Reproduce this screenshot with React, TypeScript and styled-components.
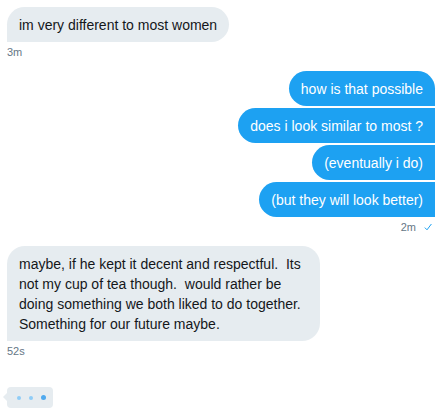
import React from "react";
import styled, { createGlobalStyle } from "styled-components";

const Global = createGlobalStyle`
  html, body { margin: 0; padding: 0; background: #ffffff; }
  body { font-family: "Liberation Sans", Arial, sans-serif; }
`;

const Page = styled.div`
  width: 440px;
  height: 420px;
  box-sizing: border-box;
  padding: 7px 5px 0 7px;
  display: flex;
  flex-direction: column;
  overflow: hidden;
`;

const Group = styled.div<{ $sent?: boolean; $gap?: number }>`
  display: flex;
  flex-direction: column;
  align-items: ${(p) => (p.$sent ? "flex-end" : "flex-start")};
  gap: 2px;
  margin-bottom: ${(p) => p.$gap ?? 12}px;
`;

const Bubble = styled.div<{ $sent?: boolean; $pos: "first" | "middle" | "last" | "single" }>`
  box-sizing: border-box;
  max-width: 313px;
  padding: 8px 12px 7px 12px;
  font-size: 14px;
  line-height: 20px;
  color: ${(p) => (p.$sent ? "#ffffff" : "#14171a")};
  background: ${(p) => (p.$sent ? "#1da1f2" : "#e6ecf0")};
  border-radius: ${(p) => {
    if (p.$sent) {
      const tr = p.$pos === "first" || p.$pos === "single" ? 18 : 0;
      return `18px ${tr}px 0 18px`;
    }
    return `18px 18px 18px 0`;
  }};
  white-space: pre-wrap;
`;

const Meta = styled.div`
  display: flex;
  align-items: center;
  gap: 8px;
  font-size: 11px;
  line-height: 14px;
  color: #657786;
  margin-top: 1px;
`;

const Check = styled.svg`
  width: 8px;
  height: 8px;
  margin-right: 3px;
`;

const Typing = styled.div`
  position: relative;
  margin-top: 27px;
  width: 46px;
  height: 21px;
  box-sizing: border-box;
  background: #e6ecf0;
  border-radius: 4px;
  display: flex;
  align-items: center;
  padding-left: 10px;
  gap: 8px;
  &::before {
    content: "";
    position: absolute;
    left: -4px;
    top: 6px;
    border-top: 4px solid transparent;
    border-bottom: 4px solid transparent;
    border-right: 4px solid #e6ecf0;
  }
`;

const Dot = styled.span<{ $size: number; $color: string }>`
  width: ${(p) => p.$size}px;
  height: ${(p) => p.$size}px;
  border-radius: 50%;
  background: ${(p) => p.$color};
`;

export default function App() {
  return (
    <>
      <Global />
      <Page>
        <Group $gap={12}>
          <Bubble $pos="single">im very different to most women</Bubble>
          <Meta>3m</Meta>
        </Group>
        <Group $sent $gap={12}>
          <Bubble $sent $pos="first">how is that possible</Bubble>
          <Bubble $sent $pos="middle">does i look similar to most ?</Bubble>
          <Bubble $sent $pos="middle">(eventually i do)</Bubble>
          <Bubble $sent $pos="last">(but they will look better)</Bubble>
          <Meta>
            2m
            <Check viewBox="0 0 8 8">
              <path d="M0.8 4.6 L3 6.8 L7.4 1" fill="none" stroke="#1da1f2" strokeWidth="1" />
            </Check>
          </Meta>
        </Group>
        <Group $gap={0}>
          <Bubble $pos="single">
            {"maybe, if he kept it decent and respectful.  Its not my cup of tea though.  would rather be doing something we both liked to do together. Something for our future maybe."}
          </Bubble>
          <Meta>52s</Meta>
          <Typing>
            <Dot $size={4} $color="#8fcdf7" />
            <Dot $size={4} $color="#8fcdf7" />
            <Dot $size={5} $color="#4fa9ee" />
          </Typing>
        </Group>
      </Page>
    </>
  );
}
